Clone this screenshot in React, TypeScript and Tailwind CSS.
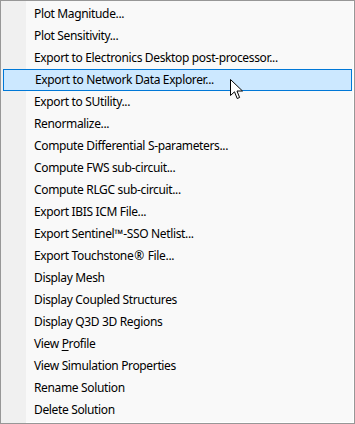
import React from 'react'

const items: React.ReactNode[] = [
    'Plot Magnitude...',
    'Plot Sensitivity...',
    'Export to Electronics Desktop post-processor...',
    'Export to Network Data Explorer...',
    'Export to SUtility...',
    'Renormalize...',
    'Compute Differential S-parameters...',
    'Compute FWS sub-circuit...',
    'Compute RLGC sub-circuit...',
    'Export IBIS ICM File...',
    'Export Sentinel™-SSO Netlist...',
    <>Export Touchstone<span className="px-[1px]">®</span> File...</>,
    'Display Mesh',
    'Display Coupled Structures',
    'Display Q3D 3D Regions',
    <>View <span className="underline underline-offset-2">P</span>rofile</>,
    'View Simulation Properties',
    'Rename Solution',
    'Delete Solution',
]

function Cursor() {
    return (
        <svg className="absolute left-[229px] top-[78px]" width="14" height="21" viewBox="0 0 14 21">
            <path
                d="M0.5 0.5 L0.5 16.5 L4.5 12.8 L7.2 19.5 L9.6 18.5 L7 12 L12.5 12 Z"
                fill="#ffffff"
                stroke="#000000"
                strokeWidth="1"
                strokeLinejoin="miter"
            />
        </svg>
    )
}

export default function App() {
    return (
        <div className="relative w-[355px] h-[424px] bg-[#f0f0f0] border border-[#979797] font-['Noto_Sans',sans-serif] text-[12px] tracking-[-0.35px] text-black">
            {/* gutter + body */}
            <div className="absolute inset-y-0 left-[25px] right-0 bg-[#f9f9f9] border-r border-b border-white" />
            <div className="relative flex flex-col pt-[2px] px-[2px]">
                {items.map((label, i) => (
                    <div
                        key={i}
                        className={`h-[22px] flex items-center pl-[31px] leading-none ${i === 3 ? 'bg-[#cce8ff] border border-[#0078d7] pl-[30px]' : ''}`}
                    >
                        <span>{label}</span>
                    </div>
                ))}
            </div>
            <Cursor />
        </div>
    )
}
